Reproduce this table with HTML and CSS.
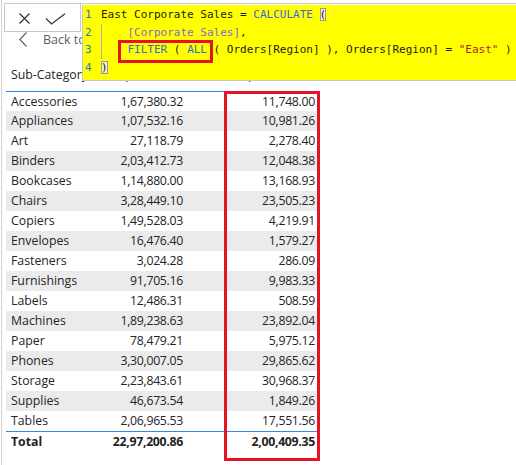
FILE: index.html
```html
<!DOCTYPE html>
<html>
<head>
<meta charset="utf-8">
<link rel="stylesheet" href="styles.css">
</head>
<body>
<div class="frame">
  <div class="formula-bar">
    <div class="actions">
      <svg class="icon-x" width="11" height="11" viewBox="0 0 11 11"><path d="M0.5 0.5 L10.5 10.5 M10.5 0.5 L0.5 10.5" stroke="#333" stroke-width="1.2" fill="none"/></svg>
      <svg class="icon-check" width="21" height="12" viewBox="0 0 21 12"><path d="M1 5.5 L6.5 11 L20 0.8" stroke="#333" stroke-width="1.2" fill="none"/></svg>
    </div>
  </div>
  <div class="back">
    <svg class="chev" width="8" height="15" viewBox="0 0 8 15"><path d="M7.5 0.5 L0.8 7.5 L7.5 14.5" stroke="#605e5c" stroke-width="1.1" fill="none"/></svg>
    <span class="back-label">Back to report</span>
  </div>
  <div class="visual">
    <table class="matrix">
      <colgroup><col class="c1"><col class="c2"><col class="c3"></colgroup>
      <thead>
        <tr><th class="lbl">Sub-Category</th><th class="num">Corporate Sales</th><th class="num">East Corporate Sales</th></tr>
      </thead>
      <tbody>
        <tr><td class="lbl">Accessories</td><td class="num">1,67,380.32</td><td class="num">11,748.00</td></tr>
        <tr><td class="lbl">Appliances</td><td class="num">1,07,532.16</td><td class="num">10,981.26</td></tr>
        <tr><td class="lbl">Art</td><td class="num">27,118.79</td><td class="num">2,278.40</td></tr>
        <tr><td class="lbl">Binders</td><td class="num">2,03,412.73</td><td class="num">12,048.38</td></tr>
        <tr><td class="lbl">Bookcases</td><td class="num">1,14,880.00</td><td class="num">13,168.93</td></tr>
        <tr><td class="lbl">Chairs</td><td class="num">3,28,449.10</td><td class="num">23,505.23</td></tr>
        <tr><td class="lbl">Copiers</td><td class="num">1,49,528.03</td><td class="num">4,219.91</td></tr>
        <tr><td class="lbl">Envelopes</td><td class="num">16,476.40</td><td class="num">1,579.27</td></tr>
        <tr><td class="lbl">Fasteners</td><td class="num">3,024.28</td><td class="num">286.09</td></tr>
        <tr><td class="lbl">Furnishings</td><td class="num">91,705.16</td><td class="num">9,983.33</td></tr>
        <tr><td class="lbl">Labels</td><td class="num">12,486.31</td><td class="num">508.59</td></tr>
        <tr><td class="lbl">Machines</td><td class="num">1,89,238.63</td><td class="num">23,892.04</td></tr>
        <tr><td class="lbl">Paper</td><td class="num">78,479.21</td><td class="num">5,975.12</td></tr>
        <tr><td class="lbl">Phones</td><td class="num">3,30,007.05</td><td class="num">29,865.62</td></tr>
        <tr><td class="lbl">Storage</td><td class="num">2,23,843.61</td><td class="num">30,968.37</td></tr>
        <tr><td class="lbl">Supplies</td><td class="num">46,673.54</td><td class="num">1,849.26</td></tr>
        <tr><td class="lbl">Tables</td><td class="num">2,06,965.53</td><td class="num">17,551.56</td></tr>
      </tbody>
      <tfoot>
        <tr><td class="lbl">Total</td><td class="num">22,97,200.86</td><td class="num">2,00,409.35</td></tr>
      </tfoot>
    </table>
  </div>

  <div class="editor">
    <div class="line"><span class="ln">1</span>East Corporate Sales = <span class="kw">CALCULATE</span> <span class="match">(</span></div>
    <div class="line"><span class="ln">2</span><span class="ig">    </span><span class="ms">[Corporate Sales]</span>,</div>
    <div class="line"><span class="ln">3</span><span class="ig">    </span><span class="kw">FILTER</span> ( <span class="kw">ALL</span> ( Orders[Region] ), Orders[Region] = <span class="str">"East"</span> )</div>
    <div class="line"><span class="ln">4</span><span class="match">)</span></div>
  </div>

  <div class="annot annot-filter"></div>
  <div class="annot annot-col"></div>
</div>
</body>
</html>
```

FILE: styles.css
```css
html, body {
  margin: 0;
  padding: 0;
  background: #ffffff;
}

body {
  width: 516px;
  height: 465px;
  overflow: hidden;
  font-family: "Open Sans", "Noto Sans", sans-serif;
  color: #252423;
}

.frame {
  position: relative;
  margin-left: 1px;
  height: 465px;
  border-left: 1px solid #d2d2d2;
  padding-top: 3px;
  box-sizing: border-box;
}

/* formula bar */
.formula-bar {
  margin-left: 2px;
  border-top: 1px solid #c8c8c8;
  height: 28px;
}

.actions {
  width: 75px;
  height: 27px;
  border: 1px solid #c8c8c8;
  border-top: none;
  display: flex;
  align-items: flex-start;
}

.icon-x {
  margin: 9px 0 0 14px;
}

.icon-check {
  margin: 9px 0 0 15px;
}

/* back row */
.back {
  display: flex;
  align-items: center;
  height: 16px;
  padding-left: 17px;
}

.chev {
  margin-top: -1px;
}

.back-label {
  margin-left: 16px;
  font-size: 12.5px;
  line-height: 16px;
  color: #605e5c;
}

/* matrix */
.visual {
  margin-top: 17px;
  padding-left: 4px;
}

.matrix {
  border-collapse: separate;
  border-spacing: 0;
  table-layout: fixed;
  width: 312px;
  font-size: 12.3px;
}

.c1 { width: 100px; }
.c2 { width: 81px; }
.c3 { width: 131px; }

.matrix th {
  font-weight: normal;
  color: #252423;
  padding: 2px 0 8px;
  line-height: 16px;
  white-space: nowrap;
  border-bottom: 1px solid #2f8be3;
}

.matrix td {
  height: 20px;
  padding: 0;
  line-height: 20px;
  white-space: nowrap;
}

.matrix tbody tr:first-child td {
  height: 19px;
  line-height: 19px;
}

.matrix tbody tr:nth-child(even) td {
  background: #ebebeb;
}

.matrix .lbl {
  text-align: left;
  padding-left: 5px;
}

.matrix .num {
  text-align: right;
  letter-spacing: -0.3px;
}

.matrix td.num:nth-child(2),
.matrix th.num:nth-child(2) {
  padding-right: 4px;
}

.matrix td.num:nth-child(3),
.matrix th.num:nth-child(3) {
  padding-right: 3px;
}

.matrix tfoot td {
  font-weight: bold;
  border-top: 1px solid #2f8be3;
  color: #252423;
}

/* DAX editor overlay */
.editor {
  position: absolute;
  left: 80px;
  top: 5px;
  right: 0;
  height: 74px;
  background: #ffff00;
  border-left: 1px solid #c8c8c8;
  border-bottom: 1px solid #c8c8c8;
  padding: 1px 0 0 2px;
  font-family: "DejaVu Sans Mono", "Liberation Mono", monospace;
  font-size: 11px;
  line-height: 17.7px;
  color: #1b1b1b;
}

.line {
  white-space: pre;
}

.ln {
  display: inline-block;
  width: 16px;
  color: #1f78d1;
}

.kw { color: #3a6ad4; }
.ms { color: #8a66cf; }
.str { color: #b31539; }

.match {
  box-shadow: inset 0 0 0 1px #9a9a9a;
  background: #f4f4c8;
}

.ig {
  display: inline-block;
  box-shadow: inset 1px 0 0 #b0b0a0;
}

/* red annotation boxes */
.annot {
  position: absolute;
  border: 3px solid #e81123;
  box-sizing: border-box;
}

.annot-filter {
  left: 116px;
  top: 40px;
  width: 95px;
  height: 23px;
}

.annot-col {
  left: 222px;
  top: 91px;
  width: 96px;
  height: 370px;
}
```
